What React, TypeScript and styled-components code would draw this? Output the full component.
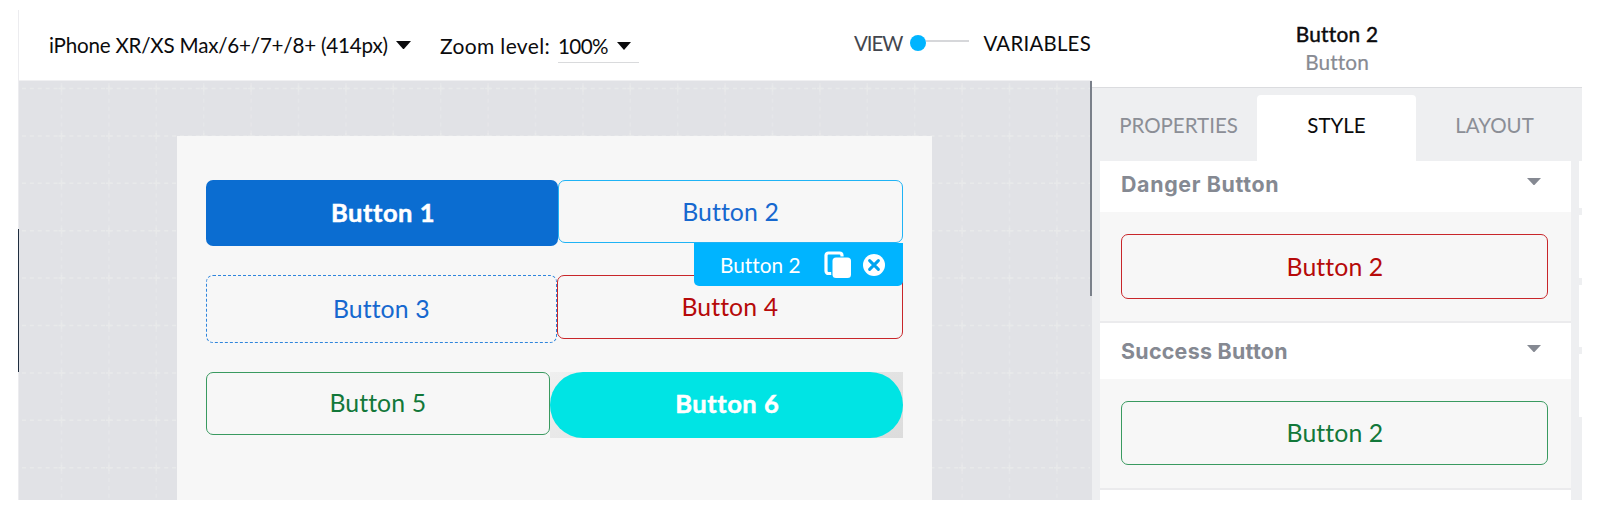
import React from 'react';
import styled, { createGlobalStyle, css } from 'styled-components';

const GlobalStyle = createGlobalStyle`
  *, *::before, *::after { box-sizing: border-box; }
  body {
    margin: 0;
    background: #fff;
    font-family: Lato, "Open Sans", sans-serif;
    font-variant-ligatures: none;
  }
`;

const Page = styled.div`
  display: flex;
  width: 1600px;
  height: 510px;
  padding: 10px 18px;
  overflow: hidden;
`;

const Editor = styled.main`
  position: relative;
  display: flex;
  flex-direction: column;
  width: 1074px;
  border-left: 1px solid #ececef;
`;

const Toolbar = styled.header`
  display: flex;
  align-items: center;
  height: 71px;
  padding-left: 30px;
  border-bottom: 1px solid #f0f0f2;
  color: #0b0b0d;
  font-size: 20.6px;
  line-height: 26px;
  white-space: nowrap;
`;

const Caret = styled.svg<{ $w: number; $h: number }>`
  display: block;
  flex: none;
  width: ${p => p.$w}px;
  height: ${p => p.$h}px;
  fill: currentColor;
`;

const DevicePicker = styled.div`
  display: flex;
  align-items: center;
  gap: 8px;
  width: 391px;
  letter-spacing: -0.21px;
`;

const ZoomLabel = styled.span`
  width: 119px;
  padding-top: 2px;
  font-size: 21px;
  letter-spacing: 0.35px;
`;

const ZoomPicker = styled.div`
  display: flex;
  align-items: center;
  justify-content: space-between;
  width: 81px;
  height: 36px;
  margin-left: -1px;
  padding: 3px 8px 0 0;
  border-bottom: 1px solid #d9dadc;
  letter-spacing: -0.6px;
`;

const ModeSwitch = styled.div`
  display: flex;
  align-items: center;
  margin: -4px 0 0 215px;
`;

const ModeLabel = styled.span<{ $active?: boolean }>`
  color: ${p => (p.$active ? '#0b0b0d' : '#43464e')};
  font-size: 20.4px;
  letter-spacing: ${p => (p.$active ? '0.25px' : '-1px')};
`;

const Track = styled.span`
  display: flex;
  align-items: center;
  width: 59px;
  margin: 0 14px 0 8px;
  &::before {
    content: '';
    width: 16px;
    height: 16px;
    border-radius: 50%;
    background: #00b4ff;
  }
  &::after {
    content: '';
    flex: 1;
    height: 2px;
    margin-top: -4px;
    background: #d6d7da;
  }
`;

const Canvas = styled.section`
  display: flex;
  flex: 1;
  padding: 55px 0 0 158px;
  background: #e1e2e6;
`;

const GridLines = styled.svg`
  position: absolute;
  left: 0;
  top: 71px;
  width: 1073px;
  height: 419px;
`;

const SideMarker = styled.span<{ $side: 'left' | 'right' }>`
  position: absolute;
  ${p =>
    p.$side === 'left'
      ? css`left: -1px; top: 219px; width: 1px; height: 143px; background: #1f2d3f;`
      : css`right: 0; top: 71px; width: 2px; height: 215px; background: #7a808a;`}
`;

const Phone = styled.div`
  position: relative;
  width: 755px;
  height: 364px;
  padding: 44px 29px 0;
  background: #f7f7f7;
`;

const ButtonRow = styled.div<{ $height: number }>`
  display: flex;
  align-items: flex-start;
  height: ${p => p.$height}px;
`;

type Kind = 'primary' | 'selected' | 'dashed' | 'danger' | 'success' | 'pill';
const solid = css`
  padding: 0 0 3px 2px;
  color: #fff;
  font-weight: 700;
  font-size: 25.5px;
  letter-spacing: 0.55px;
  -webkit-text-stroke: 0.5px #fff;
`;
const kinds = {
  primary: css`background: #0b6dd1; ${solid}`,
  selected: css`border: 1px solid #1fb3f5; color: #1668cf;`,
  dashed: css`border: 1px dashed #2f85dc; color: #1668cf;`,
  danger: css`border: 1px solid #c8262a; color: #b60a0a;`,
  success: css`border: 1px solid #3a9a60; color: #12783a;`,
  pill: css`border-radius: 33px; background: #00e4e4; ${solid}`,
};

const Button = styled.button<{ $kind: Kind; $w: number; $h: number }>`
  display: flex;
  align-items: center;
  justify-content: center;
  flex: none;
  width: ${p => p.$w}px;
  height: ${p => p.$h}px;
  padding: 0;
  border: 0;
  border-radius: 7px;
  background: transparent;
  font: 400 24.8px/30px Lato, sans-serif;
  font-variant-ligatures: none;
  letter-spacing: 0.1px;
  ${p => kinds[p.$kind]}
`;

const PillShadow = styled.div`
  background: linear-gradient(160deg, #efefef, #dcdcdc);
`;

const SelectionTag = styled.div`
  position: absolute;
  right: 29px;
  top: 107px;
  display: flex;
  align-items: center;
  width: 209px;
  height: 43px;
  padding-left: 26px;
  border-radius: 0 0 5px 5px;
  background: #00b4ff;
  color: #fff;
  font-size: 20.8px;
`;

const TagName = styled.span`
  width: 104px;
`;

const CloseIcon = styled.svg`
  margin-left: 11px;
`;

const Inspector = styled.aside`
  display: flex;
  flex-direction: column;
  width: 490px;
`;

const InspectorHead = styled.header`
  display: flex;
  flex-direction: column;
  align-items: center;
  height: 78px;
  padding: 10px 0 0;
  border-bottom: 1px solid #dbdcdf;
  font-size: 20.8px;
  line-height: 28px;
`;

const SelectedName = styled.strong`
  color: #0b0b0d;
  font-weight: 400;
  letter-spacing: 0.25px;
  -webkit-text-stroke: 0.45px #0b0b0d;
`;

const SelectedType = styled.span`
  color: #888b93;
  letter-spacing: 0.1px;
  -webkit-text-stroke: 0.2px #888b93;
`;

const Tabs = styled.nav`
  display: flex;
  align-items: flex-end;
  height: 73px;
  padding: 0 9px 0 8px;
  background: #eeeff1;
`;

const Tab = styled.span<{ $active?: boolean }>`
  width: ${p => (p.$active ? 159 : 157)}px;
  height: 66px;
  border-radius: 4px 4px 0 0;
  background: ${p => (p.$active ? '#fff' : 'transparent')};
  color: ${p => (p.$active ? '#0b0b0d' : '#8b8e96')};
  font-size: 20.5px;
  line-height: 60px;
  text-align: center;
`;

const InspectorBody = styled.div`
  display: flex;
  flex: 1;
  min-height: 0;
  padding-left: 8px;
  background: #eeeff1;
`;

const StyleList = styled.div`
  width: 470.5px;
  background: #fff;
  overflow: hidden;
`;

const GroupHead = styled.div<{ $h: number; $gap: number }>`
  display: flex;
  align-items: center;
  justify-content: space-between;
  height: ${p => p.$h}px;
  padding: 0 29.5px ${p => p.$gap}px 21px;
  background: #fff;
  color: #858992;
  font-family: Inter, Lato, sans-serif;
  font-weight: 700;
  font-size: 21.4px;
  line-height: 28px;
  svg { margin-top: -5px; }
`;

const GroupTitle = styled.span<{ $spacing: number }>`
  letter-spacing: ${p => p.$spacing}px;
  white-space: nowrap;
`;

const GroupBody = styled.div`
  height: 111px;
  padding: 22px 0 0 21.4px;
  border-bottom: 2px solid #ebebed;
  background: #f7f7f7;
`;

const NextStrip = styled.div`
  width: 3px;
  margin-left: 8.5px;
`;

const StripCell = styled.div<{ $h: number }>`
  height: ${p => p.$h}px;
  margin-bottom: 7px;
  background: #fff;
`;

const Down = ({ w, h }: { w: number; h: number }) => (
  <Caret $w={w} $h={h} viewBox="0 0 16 8" preserveAspectRatio="none">
    <path d="M0 0H16L8 8Z" />
  </Caret>
);

const xs = Array.from({ length: 23 }, (_, i) => 42.5 + i * 47.4);
const ys = Array.from({ length: 9 }, (_, i) => 7.5 + i * 47.4);

export default function App() {
  return (
    <>
      <GlobalStyle />
      <Page>
        <Editor>
          <Toolbar>
            <DevicePicker>
              iPhone XR/XS Max/6+/7+/8+ (414px)
              <Down w={15} h={8.5} />
            </DevicePicker>
            <ZoomLabel>Zoom level:</ZoomLabel>
            <ZoomPicker>
              100%
              <Down w={14} h={8} />
            </ZoomPicker>
            <ModeSwitch>
              <ModeLabel>VIEW</ModeLabel>
              <Track />
              <ModeLabel $active>VARIABLES</ModeLabel>
            </ModeSwitch>
          </Toolbar>
          <GridLines>
            <g stroke="#e8e9ea" strokeWidth="1.5" fill="none">
              {ys.map(y => <path key={y} d={`M3 ${y}H1071`} strokeDasharray="4 3.9" />)}
              {xs.map(x => <path key={x} d={`M${x} 2V419`} strokeDasharray="4 3.9" stroke="#e5e6e9" />)}
              {xs.map(x => ys.map(y => <path key={`${x}-${y}`} d={`M${x - 3} ${y}h6M${x} ${y - 3}v6`} />))}
            </g>
          </GridLines>
          <Canvas>
            <Phone>
              <ButtonRow $height={94.5}>
                <Button $kind="primary" $w={352} $h={66}>Button 1</Button>
                <Button $kind="selected" $w={345} $h={63}>Button 2</Button>
              </ButtonRow>
              <ButtonRow $height={97}>
                <Button $kind="dashed" $w={350.5} $h={68}>Button 3</Button>
                <Button $kind="danger" $w={346.5} $h={64}>Button 4</Button>
              </ButtonRow>
              <ButtonRow $height={66}>
                <Button $kind="success" $w={343.5} $h={63.5}>Button 5</Button>
                <PillShadow>
                  <Button $kind="pill" $w={353.5} $h={66}>Button 6</Button>
                </PillShadow>
              </ButtonRow>
              <SelectionTag>
                <TagName>Button 2</TagName>
                <svg width="28" height="28" viewBox="0 0 28 28">
                  <rect x="2" y="2" width="16" height="20.5" rx="2.5" fill="none" stroke="#fff" strokeWidth="3.2" />
                  <rect x="7.2" y="5.5" width="20.5" height="22" rx="4.5" fill="#00b4ff" />
                  <rect x="8.5" y="6.6" width="18.5" height="20.3" rx="3.5" fill="#fff" />
                </svg>
                <CloseIcon width="22" height="22" viewBox="0 0 22 22">
                  <circle cx="11" cy="11" r="11" fill="#fff" />
                  <path d="M6.6 6.6l8.8 8.8M15.4 6.6l-8.8 8.8" stroke="#00a4f0" strokeWidth="3" strokeLinecap="round" />
                </CloseIcon>
              </SelectionTag>
            </Phone>
          </Canvas>
          <SideMarker $side="left" />
          <SideMarker $side="right" />
        </Editor>
        <Inspector>
          <InspectorHead>
            <SelectedName>Button 2</SelectedName>
            <SelectedType>Button</SelectedType>
          </InspectorHead>
          <Tabs>
            <Tab>PROPERTIES</Tab>
            <Tab $active>STYLE</Tab>
            <Tab>LAYOUT</Tab>
          </Tabs>
          <InspectorBody>
            <StyleList>
              <GroupHead $h={51} $gap={5}>
                <GroupTitle $spacing={0.65}>Danger Button</GroupTitle>
                <Down w={14} h={7.5} />
              </GroupHead>
              <GroupBody>
                <Button $kind="danger" $w={427} $h={65}>Button 2</Button>
              </GroupBody>
              <GroupHead $h={56} $gap={0}>
                <GroupTitle $spacing={0.28}>Success Button</GroupTitle>
                <Down w={14} h={7.5} />
              </GroupHead>
              <GroupBody>
                <Button $kind="success" $w={427} $h={64}>Button 2</Button>
              </GroupBody>
            </StyleList>
            <NextStrip>
              <StripCell $h={47} />
              <StripCell $h={63} />
              <StripCell $h={62} />
              <StripCell $h={63} />
            </NextStrip>
          </InspectorBody>
        </Inspector>
      </Page>
    </>
  );
}
